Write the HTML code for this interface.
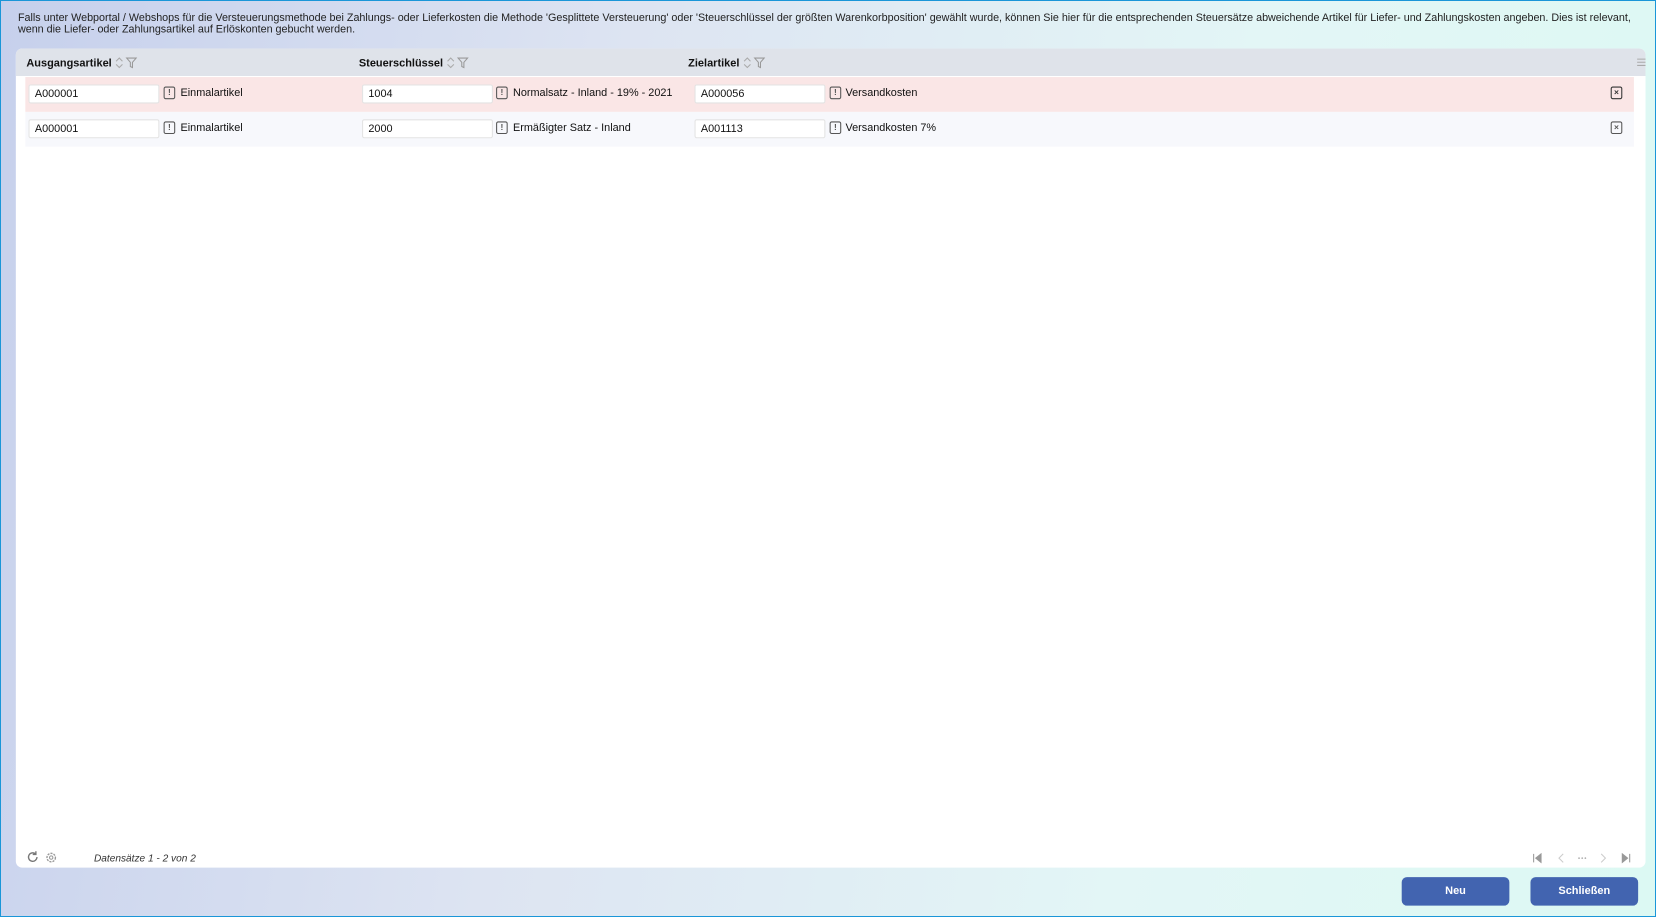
<!DOCTYPE html>
<html><head><meta charset="utf-8"><style>
*{box-sizing:border-box;margin:0;padding:0}
html{width:1656px;height:917px;overflow:hidden}
body{width:1656px;height:917px;overflow:hidden;font-family:"Liberation Sans",Arial,sans-serif;font-size:11px;color:#111;
background:linear-gradient(100deg,#c6d0ec 0%,#dde4f2 35%,#e3f6f6 70%,#dcf9f3 100%);border:1px solid #1a96d8;position:relative}
#w{position:absolute;left:-1px;top:-1px;width:1566px;height:867px;transform:scale(1.0555);transform-origin:0 0}
.ab{position:absolute;white-space:nowrap}
.desc{left:17px;top:12px;font-size:10.2px;line-height:11px;color:#222;width:1545px;white-space:normal}
.panel{left:15px;top:46px;width:1544px;height:776px;background:#fff;border-radius:6px;overflow:hidden}
.hdr{left:0;top:0;width:1544px;height:26px;background:#dfe3ea}
.hdr span{position:absolute;top:8px;font-weight:bold;font-size:10.4px;white-space:nowrap}
.hdr svg{vertical-align:-2px;margin-left:2px}
.row{left:9px;width:1524px;height:33px}
.inp{position:absolute;top:7px;width:124px;height:18px;background:#fff;border:1px solid #e3e3e3;border-radius:2px;padding:3px 5px;font-size:10.3px}
.ic{position:absolute;top:9px;width:11px;height:12px;border:1.3px solid #555;border-radius:2px;font-size:8px;font-weight:bold;text-align:center;line-height:9px;color:#555}
.lbl{position:absolute;top:10px;font-size:10.3px;white-space:nowrap}
.btn{top:831px;width:102px;height:27px;background:#4264b0;color:#fff;border-radius:5px;font-weight:bold;text-align:center;line-height:27px;font-size:10.4px}
</style></head><body><div id="w">
<div class="ab desc">Falls unter Webportal / Webshops für die Versteuerungsmethode bei Zahlungs- oder Lieferkosten die Methode 'Gesplittete Versteuerung' oder 'Steuerschlüssel der größten Warenkorbposition' gewählt wurde, können Sie hier für die entsprechenden Steuersätze abweichende Artikel für Liefer- und Zahlungskosten angeben. Dies ist relevant, wenn die Liefer- oder Zahlungsartikel auf Erlöskonten gebucht werden.</div>
<div class="ab panel">
 <div class="ab hdr">
  <span style="left:10px">Ausgangsartikel<svg width="22" height="11"><path d="M2 4l3-3 3 3M2 7l3 3 3-3" fill="none" stroke="#aaa"/><path d="M12 1h9l-3.5 4v5l-2-1V5z" fill="none" stroke="#999"/></svg></span>
  <span style="left:325px">Steuerschlüssel<svg width="22" height="11"><path d="M2 4l3-3 3 3M2 7l3 3 3-3" fill="none" stroke="#aaa"/><path d="M12 1h9l-3.5 4v5l-2-1V5z" fill="none" stroke="#999"/></svg></span>
  <span style="left:637px">Zielartikel<svg width="22" height="11"><path d="M2 4l3-3 3 3M2 7l3 3 3-3" fill="none" stroke="#aaa"/><path d="M12 1h9l-3.5 4v5l-2-1V5z" fill="none" stroke="#999"/></svg></span>
  <svg class="ab" style="left:1534px;top:9px" width="9" height="8"><path d="M0 1h9M0 4h9M0 7h9" stroke="#aaa"/></svg>
 </div>
 <div class="ab row" style="top:27px;background:#fae6e6">
  <div class="inp" style="left:3px">A000001</div><div class="ic" style="left:131px">!</div><div class="lbl" style="left:147px">Einmalartikel</div>
  <div class="inp" style="left:319px">1004</div><div class="ic" style="left:446px">!</div><div class="lbl" style="left:462px">Normalsatz - Inland - 19% - 2021</div>
  <div class="inp" style="left:634px">A000056</div><div class="ic" style="left:762px">!</div><div class="lbl" style="left:777px">Versandkosten</div>
  <div class="ic" style="left:1502px;border-color:#333;color:#333">×</div>
 </div>
 <div class="ab row" style="top:60px;background:#f7f8fc">
  <div class="inp" style="left:3px">A000001</div><div class="ic" style="left:131px">!</div><div class="lbl" style="left:147px">Einmalartikel</div>
  <div class="inp" style="left:319px">2000</div><div class="ic" style="left:446px">!</div><div class="lbl" style="left:462px">Ermäßigter Satz - Inland</div>
  <div class="inp" style="left:634px">A001113</div><div class="ic" style="left:762px">!</div><div class="lbl" style="left:777px">Versandkosten 7%</div>
  <div class="ic" style="left:1502px">×</div>
 </div>
 <svg class="ab" style="left:10px;top:760px" width="12" height="12"><path d="M10 6a4 4 0 1 1-1.5-3.1M9 0.5v3h-3" fill="none" stroke="#777" stroke-width="1.3"/></svg>
 <svg class="ab" style="left:28px;top:761px" width="11" height="11"><circle cx="5.5" cy="5.5" r="4" fill="none" stroke="#999" stroke-width="1.3" stroke-dasharray="2 1"/><circle cx="5.5" cy="5.5" r="1.6" fill="none" stroke="#999"/></svg>
 <div class="ab" style="left:74px;top:762px;font-style:italic;font-size:9.6px;color:#333">Datensätze 1 - 2 von 2</div>
 <svg class="ab" style="left:1437px;top:762px" width="95" height="10"><path d="M1 1v8M8 1L3 5l5 4z" stroke="#999" fill="#999"/><path d="M29 1l-4 4 4 4" stroke="#ccc" fill="none"/><circle cx="44" cy="5" r=".8" fill="#aaa"/><circle cx="47" cy="5" r=".8" fill="#aaa"/><circle cx="50" cy="5" r=".8" fill="#aaa"/><path d="M65 1l4 4-4 4" stroke="#ccc" fill="none"/><path d="M85 1l5 4-5 4zM92 1v8" stroke="#999" fill="#999"/></svg>
</div>
<div class="ab btn" style="left:1328px">Neu</div>
<div class="ab btn" style="left:1450px">Schließen</div>
</div></body></html>
